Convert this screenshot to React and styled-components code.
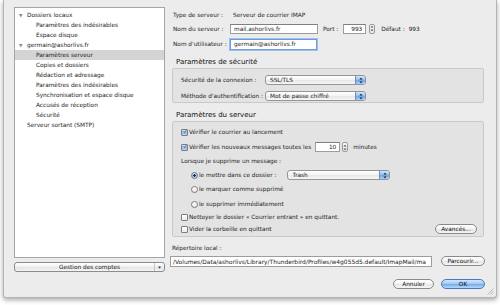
import React from "react";
import styled, { createGlobalStyle, css } from "styled-components";

const GlobalStyle = createGlobalStyle`
  html, body { margin: 0; padding: 0; background: #fff; }
  body {
    font-family: "DejaVu Sans", "Liberation Sans", sans-serif;
    font-size: 5.8px;
    color: #1c1c1c;
  }
`;

const tree = [
  { label: "Dossiers locaux", level: 0, open: true },
  { label: "Paramètres des indésirables", level: 1 },
  { label: "Espace disque", level: 1 },
  { label: "germain@ashorlivs.fr", level: 0, open: true },
  { label: "Paramètres serveur", level: 1, selected: true },
  { label: "Copies et dossiers", level: 1 },
  { label: "Rédaction et adressage", level: 1 },
  { label: "Paramètres des indésirables", level: 1 },
  { label: "Synchronisation et espace disque", level: 1 },
  { label: "Accusés de réception", level: 1 },
  { label: "Sécurité", level: 1 },
  { label: "Serveur sortant (SMTP)", level: 0 },
];

const Check = () => (
  <svg width="7" height="7" viewBox="0 0 7 7">
    <path d="M1.2 3.4 L2.8 5.2 L6.2 0.6" fill="none" stroke="#1f2f4a" strokeWidth="1.1" />
  </svg>
);

const Arrows = ({ color = "#1a1a1a" }) => (
  <svg width="4" height="7" viewBox="0 0 4 7">
    <path d="M0.4 2.6 L2 0.8 L3.6 2.6 Z M0.4 4.4 L2 6.2 L3.6 4.4 Z" fill={color} />
  </svg>
);

const App = () => {
  return (
    <Page>
      <GlobalStyle />
      <Window>
        <Sidebar>
          <TreeBox>
            {tree.map((item, i) => (
              <TreeRow key={i} $level={item.level} $selected={item.selected}>
                {item.level === 0 && <Disclosure>{item.open ? "▼" : ""}</Disclosure>}
                {item.label}
              </TreeRow>
            ))}
          </TreeBox>
          <ActionButton>
            <span>Gestion des comptes</span>
            <ActionArrow>▾</ActionArrow>
          </ActionButton>
        </Sidebar>

        <Main>
          <FieldRow $top={3} $h={10}>
            <FieldLabel $w={60}>Type de serveur :</FieldLabel>
            <span>Serveur de courrier IMAP</span>
          </FieldRow>
          <FieldRow $top={3} $h={11}>
            <FieldLabel $w={57}>Nom du serveur :</FieldLabel>
            <TextInput $w={88}>mail.ashorlivs.fr</TextInput>
            <InlineText $left={5}>Port :</InlineText>
            <TextInput $w={23} $left={5} $right>993</TextInput>
            <Stepper $left={3}><Arrows color="#555" /></Stepper>
            <InlineText $left={6}>Défaut :</InlineText>
            <InlineText $left={4}>993</InlineText>
          </FieldRow>
          <FieldRow $top={4} $h={12}>
            <FieldLabel $w={57}>Nom d'utilisateur :</FieldLabel>
            <TextInput $w={87} $focused>germain@ashorlivs.fr</TextInput>
          </FieldRow>

          <SectionTitle $top={7}>Paramètres de sécurité</SectionTitle>
          <GroupBox $h={35} $pt={6}>
            <BoxRow $gap={0}>
              <FieldLabel $w={84}>Sécurité de la connexion :</FieldLabel>
              <PopUp $w={101}>
                <span>SSL/TLS</span>
                <PopArrows><Arrows /></PopArrows>
              </PopUp>
            </BoxRow>
            <BoxRow $gap={6}>
              <FieldLabel $w={84}>Méthode d'authentification :</FieldLabel>
              <PopUp $w={101}>
                <span>Mot de passe chiffré</span>
                <PopArrows><Arrows /></PopArrows>
              </PopUp>
            </BoxRow>
          </GroupBox>

          <SectionTitle $top={7}>Paramètres du serveur</SectionTitle>
          <GroupBox $h={116} $pt={5}>
            <BoxRow $gap={0}>
              <CheckBox $checked><Check /></CheckBox>
              Vérifier le courrier au lancement
            </BoxRow>
            <BoxRow $gap={5}>
              <CheckBox $checked><Check /></CheckBox>
              Vérifier les nouveaux messages toutes les
              <TextInput $w={25} $left={4} $right>10</TextInput>
              <Stepper $left={2}><Arrows color="#555" /></Stepper>
              <InlineText $left={5}>minutes</InlineText>
            </BoxRow>
            <BoxRow $gap={4}>Lorsque je supprime un message :</BoxRow>
            <BoxRow $gap={4} $indent={10}>
              <Radio $checked />
              le mettre dans ce dossier :
              <PopUp $w={103} $left={11}>
                <span>Trash</span>
                <PopArrows><Arrows /></PopArrows>
              </PopUp>
            </BoxRow>
            <BoxRow $gap={4} $indent={10}>
              <Radio />
              le marquer comme supprimé
            </BoxRow>
            <BoxRow $gap={5} $indent={10}>
              <Radio />
              le supprimer immédiatement
            </BoxRow>
            <BoxRow $gap={3}>
              <CheckBox />
              Nettoyer le dossier « Courrier entrant » en quittant.
            </BoxRow>
            <BoxRow $gap={2}>
              <CheckBox />
              Vider la corbeille en quittant
              <PushButton $w={42} $push>Avancés...</PushButton>
            </BoxRow>
          </GroupBox>

          <LocalLabel>Répertoire local :</LocalLabel>
          <PathRow>
            <PathInput>/Volumes/Data/ashorlivs/Library/Thunderbird/Profiles/w4g055d5.default/ImapMail/ma</PathInput>
            <PushButton $w={44}>Parcourir...</PushButton>
          </PathRow>
          <Footer>
            <PushButton $w={41}>Annuler</PushButton>
            <PushButton $w={44} $primary>OK</PushButton>
          </Footer>
        </Main>
        <ResizeGrip>
          <svg width="8" height="8" viewBox="0 0 8 8">
            <path d="M7.5 1.5 L1.5 7.5 M7.5 4 L4 7.5 M7.5 6.5 L6.5 7.5" stroke="#a8a8a8" strokeWidth="0.7" />
          </svg>
        </ResizeGrip>
      </Window>
    </Page>
  );
};

const Page = styled.div`
  width: 500px;
  height: 305px;
  padding: 0 3px;
  box-sizing: border-box;
  overflow: hidden;
`;

const Window = styled.div`
  position: relative;
  width: 494px;
  height: 298px;
  box-sizing: border-box;
  background: #ececec;
  border: 1px solid #b4b4b4;
  border-top: none;
  border-radius: 0 0 3px 3px;
  box-shadow: 0 2px 5px rgba(0, 0, 0, 0.35);
  display: flex;
  padding: 7px 11px 0 10px;
`;

const Sidebar = styled.div`
  width: 151px;
  display: flex;
  flex-direction: column;
`;

const TreeBox = styled.div`
  height: 251px;
  box-sizing: border-box;
  background: #fff;
  border: 1px solid #a5a5a5;
  padding-top: 2px;
`;

const TreeRow = styled.div`
  height: 10px;
  display: flex;
  align-items: center;
  padding-left: ${(p) => (p.$level === 0 ? 4 : 21)}px;
  background: ${(p) => (p.$selected ? "#d4d4d4" : "transparent")};
  white-space: nowrap;
`;

const Disclosure = styled.span`
  width: 8px;
  font-size: 4.5px;
  color: #8a8a8a;
`;

const ActionButton = styled.div`
  margin-top: 4px;
  height: 10px;
  box-sizing: border-box;
  border: 1px solid #8c8c8c;
  border-radius: 3px;
  background: linear-gradient(#ffffff, #f0f0f0 50%, #e4e4e4 51%, #f4f4f4);
  display: flex;
  align-items: center;
  justify-content: center;
  position: relative;
`;

const ActionArrow = styled.span`
  position: absolute;
  right: 0;
  top: 0;
  bottom: 0;
  width: 9px;
  border-left: 1px solid #c4c4c4;
  display: flex;
  align-items: center;
  justify-content: center;
  font-size: 5px;
  color: #333;
`;

const Main = styled.div`
  flex: 1;
  margin-left: 5px;
  display: flex;
  flex-direction: column;
`;

const FieldRow = styled.div`
  margin-top: ${(p) => p.$top}px;
  height: ${(p) => p.$h}px;
  display: flex;
  align-items: center;
  padding-left: 3px;
  white-space: nowrap;
`;

const FieldLabel = styled.span`
  width: ${(p) => p.$w}px;
  flex: none;
  white-space: nowrap;
`;

const InlineText = styled.span`
  margin-left: ${(p) => p.$left || 0}px;
`;

const TextInput = styled.div`
  width: ${(p) => p.$w}px;
  height: 10px;
  margin-left: ${(p) => p.$left || 0}px;
  box-sizing: border-box;
  flex: none;
  background: #fff;
  border: 1px solid #9d9d9d;
  border-top-color: #7f7f7f;
  display: flex;
  align-items: center;
  justify-content: ${(p) => (p.$right ? "flex-end" : "flex-start")};
  padding: 0 3px;
  white-space: nowrap;
  overflow: hidden;
  ${(p) =>
    p.$focused &&
    css`
      height: 11px;
      border-color: #6f9bd8;
      box-shadow: 0 0 0 1px #9cc0ee;
    `}
`;

const Stepper = styled.div`
  margin-left: ${(p) => p.$left || 0}px;
  width: 6px;
  height: 10px;
  box-sizing: border-box;
  border: 1px solid #9a9a9a;
  border-radius: 2px;
  background: linear-gradient(#fdfdfd, #e6e6e6);
  display: flex;
  align-items: center;
  justify-content: center;
`;

const SectionTitle = styled.div`
  margin-top: ${(p) => p.$top}px;
  height: 10px;
  display: flex;
  align-items: center;
  padding-left: 6px;
  font-size: 7px;
  color: #111;
`;

const GroupBox = styled.div`
  margin: 1px 1px 0 2px;
  height: ${(p) => p.$h}px;
  box-sizing: border-box;
  background: #e3e3e3;
  border: 1px solid #c9c9c9;
  border-radius: 2px;
  padding: ${(p) => p.$pt}px 6px 0 8px;
  display: flex;
  flex-direction: column;
`;

const BoxRow = styled.div`
  margin-top: ${(p) => p.$gap}px;
  height: 10px;
  display: flex;
  align-items: center;
  padding-left: ${(p) => p.$indent || 0}px;
  white-space: nowrap;
`;

const PopUp = styled.div`
  width: ${(p) => p.$w}px;
  margin-left: ${(p) => p.$left || 0}px;
  height: 10px;
  box-sizing: border-box;
  border: 1px solid #959595;
  border-radius: 3px;
  background: linear-gradient(#ffffff, #f3f3f3 50%, #e6e6e6 51%, #f6f6f6);
  display: flex;
  align-items: center;
  padding-left: 4px;
  overflow: hidden;
  span { flex: 1; }
`;

const PopArrows = styled.div`
  width: 9px;
  height: 100%;
  background: linear-gradient(#cfe3fb, #8dbdf1 50%, #6aa5ea 51%, #a9d0f8);
  border-left: 1px solid #6f8fbc;
  display: flex;
  align-items: center;
  justify-content: center;
`;

const CheckBox = styled.div`
  width: 7px;
  height: 7px;
  box-sizing: border-box;
  margin-right: 1px;
  border: 1px solid #7e7e7e;
  border-radius: 1px;
  background: ${(p) =>
    p.$checked
      ? "linear-gradient(#d4e6fb, #95c1f0 50%, #7db2ec 51%, #b9d8fa)"
      : "linear-gradient(#ffffff, #ececec)"};
  display: flex;
  align-items: center;
  justify-content: center;
  flex: none;
  svg { margin-top: -2px; margin-left: 1px; }
`;

const Radio = styled.div`
  width: 7px;
  height: 7px;
  box-sizing: border-box;
  margin-right: 1px;
  border: 1px solid #7a7a7a;
  border-radius: 50%;
  flex: none;
  background: ${(p) =>
    p.$checked
      ? "radial-gradient(circle, #1b2a44 0 1.1px, transparent 1.4px), linear-gradient(#d4e6fb, #86b8ee 55%, #b9d8fa)"
      : "linear-gradient(#ffffff, #e8e8e8)"};
`;

const PushButton = styled.div`
  width: ${(p) => p.$w}px;
  height: 10px;
  box-sizing: border-box;
  flex: none;
  margin-left: ${(p) => (p.$push ? "auto" : "0")};
  border: 1px solid ${(p) => (p.$primary ? "#4a79b8" : "#8a8a8a")};
  border-radius: 6px;
  background: ${(p) =>
    p.$primary
      ? "linear-gradient(#d2e6fc, #9fc8f4 50%, #6ea9ec 51%, #b6daf9)"
      : "linear-gradient(#ffffff, #f4f4f4 50%, #e4e4e4 51%, #f6f6f6)"};
  display: flex;
  align-items: center;
  justify-content: center;
  color: #111;
`;

const LocalLabel = styled.div`
  margin-top: 6px;
  height: 10px;
  display: flex;
  align-items: center;
  padding-left: 2px;
`;

const PathRow = styled.div`
  margin-top: 2px;
  height: 12px;
  display: flex;
  align-items: center;
  gap: 9px;
`;

const PathInput = styled.div`
  width: 262px;
  height: 11px;
  box-sizing: border-box;
  background: #fff;
  border: 1px solid #9d9d9d;
  display: flex;
  align-items: center;
  padding: 0 2px;
  font-size: 5.95px;
  white-space: nowrap;
  overflow: hidden;
`;

const Footer = styled.div`
  margin-top: 11px;
  height: 12px;
  display: flex;
  align-items: center;
  justify-content: flex-end;
  gap: 7px;
`;

const ResizeGrip = styled.div`
  position: absolute;
  right: 2px;
  bottom: 2px;
  width: 8px;
  height: 8px;
`;

export default App;
